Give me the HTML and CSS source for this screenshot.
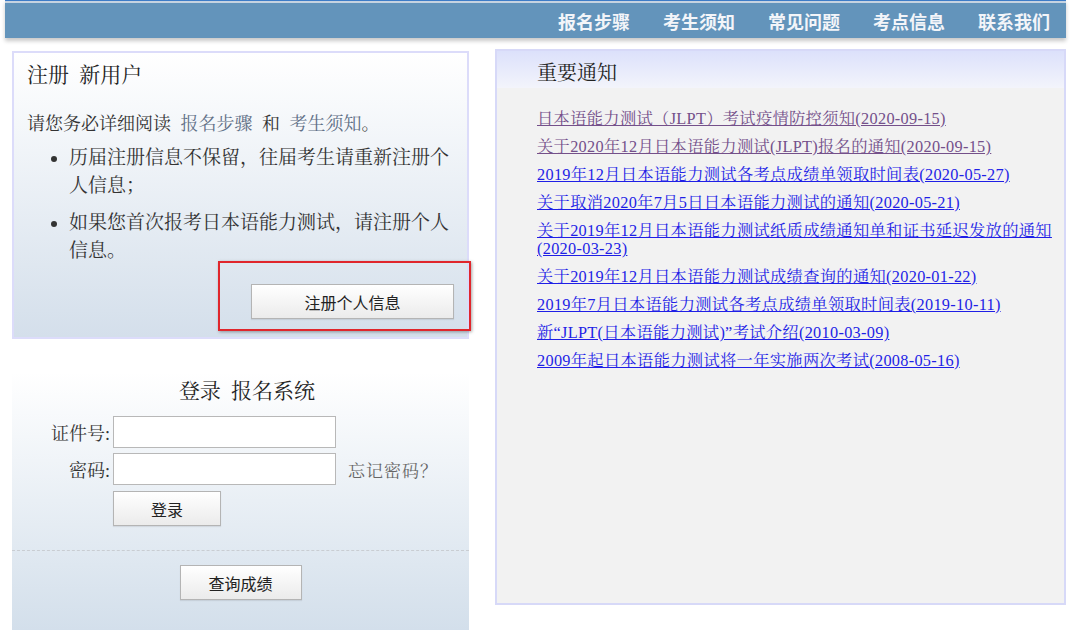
FILE: index.html
```html
<!DOCTYPE html>
<html lang="zh-CN">
<head>
    <meta charset="UTF-8">
    <meta name="viewport" content="width=device-width, initial-scale=1.0">
    <title>日本语能力测试 报名系统</title>
    <link rel="stylesheet" href="styles.css">
</head>
<body>
<div class="topbar">
    <ul class="nav">
        <li>报名步骤</li>
        <li>考生须知</li>
        <li>常见问题</li>
        <li>考点信息</li>
        <li>联系我们</li>
    </ul>
</div>

<div class="main">
    <div class="side">
        <div class="reg-box">
            <h2>注册 新用户</h2>
            <p class="intro">请您务必详细阅读 <a href="#">报名步骤</a> 和 <a href="#">考生须知</a>。</p>
            <ul class="tips">
                <li>历届注册信息不保留，往届考生请重新注册个人信息；</li>
                <li>如果您首次报考日本语能力测试，请注册个人信息。</li>
            </ul>
            <div class="reg-action">
                <button class="btn btn-reg">注册个人信息</button>
            </div>
            <div class="mark"></div>
        </div>

        <div class="login-box">
            <h2>登录 报名系统</h2>
            <div class="login-form">
                <label>证件号:</label>
                <input type="text">
                <label>密码:</label>
                <input type="password">
                <a class="forgot" href="#">忘记密码？</a>
                <button class="btn btn-login">登录</button>
            </div>
            <div class="divider"></div>
            <div class="query">
                <button class="btn btn-query">查询成绩</button>
            </div>
        </div>
    </div>

    <div class="notice-box">
        <h2>重要通知</h2>
        <ul class="notice-list">
            <li><a class="visited" href="#">日本语能力测试（JLPT）考试疫情防控须知(2020-09-15)</a></li>
            <li><a class="visited" href="#">关于2020年12月日本语能力测试(JLPT)报名的通知(2020-09-15)</a></li>
            <li><a href="#">2019年12月日本语能力测试各考点成绩单领取时间表(2020-05-27)</a></li>
            <li><a href="#">关于取消2020年7月5日日本语能力测试的通知(2020-05-21)</a></li>
            <li><a href="#">关于2019年12月日本语能力测试纸质成绩通知单和证书延迟发放的通知(2020-03-23)</a></li>
            <li><a href="#">关于2019年12月日本语能力测试成绩查询的通知(2020-01-22)</a></li>
            <li><a href="#">2019年7月日本语能力测试各考点成绩单领取时间表(2019-10-11)</a></li>
            <li><a href="#">新“JLPT(日本语能力测试)”考试介绍(2010-03-09)</a></li>
            <li><a href="#">2009年起日本语能力测试将一年实施两次考试(2008-05-16)</a></li>
        </ul>
    </div>
</div>
</body>
</html>
```

FILE: styles.css
```css
body {
    margin: 0;
    font-family: "Liberation Serif", "Noto Serif CJK SC", "Noto Sans CJK SC", serif;
    color: #333;
    background: #fff;
}

/* top navigation */
.topbar {
    margin-left: 5px;
    width: 1061px;
    height: 38px;
    background: linear-gradient(#3d7cc7 0, #3d7cc7 1px, #c6d3e1 1px, #c6d3e1 3px, #6394bb 3px);
    box-shadow: 0 3px 4px rgba(0,0,0,0.22);
}

.nav {
    list-style: none;
    margin: 0;
    padding: 3px 16px 0 0;
    height: 35px;
    display: flex;
    justify-content: flex-end;
    align-items: center;
    gap: 33px;
}

.nav li {
    font-family: "Noto Sans CJK SC", sans-serif;
    font-weight: bold;
    font-size: 18px;
    color: #f3f5f9;
}

.main {
    display: flex;
    align-items: flex-start;
    gap: 26px;
    padding: 11px 0 0 12px;
}

.side {
    width: 457px;
    margin-top: 2px;
}

h2 {
    margin: 0;
    font-weight: normal;
    line-height: 28px;
    word-spacing: 5px;
    color: #222;
}

/* register */
.reg-box {
    position: relative;
    height: 288px;
    box-sizing: border-box;
    border: 2px solid #dcdcfa;
    background: linear-gradient(#ffffff, #d4dfeb);
    padding: 8px 11px 0 13px;
}

.reg-box h2 {
    font-size: 21px;
}

.intro {
    margin: 21px 0 0;
    font-size: 18px;
    line-height: 28px;
    word-spacing: 5px;
}

.intro a {
    color: #5f6f86;
    text-decoration: none;
}

.tips {
    margin: 6px 0 0;
    padding-left: 42px;
    font-size: 19px;
    line-height: 28px;
}

.tips li + li {
    margin-top: 9px;
}

.reg-action {
    display: flex;
    justify-content: flex-end;
    margin-top: 19px;
}

.btn {
    font-family: "Noto Sans CJK SC", sans-serif;
    font-size: 16px;
    color: #222;
    border: 1px solid #b4b4b4;
    border-radius: 0;
    padding: 0;
    background: linear-gradient(#ffffff, #ebebeb);
    box-shadow: 0 1px 1px rgba(0,0,0,0.08);
    height: 35px;
}

.btn-reg {
    width: 203px;
    margin-right: 2px;
}

.mark {
    position: absolute;
    left: 204px;
    top: 208px;
    width: 253px;
    height: 70px;
    box-sizing: border-box;
    border: 2px solid #e0262c;
    box-shadow: 1px 1px 3px rgba(0,0,0,0.35);
}

/* login */
.login-box {
    margin-top: 33px;
    height: 258px;
    box-sizing: border-box;
    padding-top: 5px;
    background: linear-gradient(#ffffff, #d3dfeb);
}

.login-box h2 {
    font-size: 21px;
    text-align: center;
    padding-left: 13px;
}

.login-form {
    display: grid;
    grid-template-columns: 98px 223px auto;
    column-gap: 3px;
    row-gap: 5px;
    align-items: center;
    margin-top: 11px;
}

.login-form label {
    grid-column: 1;
    text-align: right;
    font-size: 18px;
}

.login-form input {
    width: 223px;
    height: 32px;
    box-sizing: border-box;
    margin: 0;
    border: 1px solid #b8b8b8;
    background: #fff;
}

.forgot {
    margin-left: 9px;
    font-size: 17px;
    letter-spacing: 1px;
    color: #666;
    text-decoration: none;
}

.btn-login {
    grid-column: 2;
    width: 108px;
    margin-top: 1px;
}

.divider {
    margin-top: 24px;
    border-top: 1px dashed #c9cdd2;
}

.query {
    display: flex;
    justify-content: center;
    margin-top: 14px;
}

.btn-query {
    width: 122px;
}

/* notices */
.notice-box {
    width: 571px;
    height: 556px;
    box-sizing: border-box;
    border: 2px solid #d7d9f8;
    background: linear-gradient(#dce1fb, #f3f4fb 37px, #f2f2f2 37px);
    padding: 8px 4px 0 40px;
}

.notice-box h2 {
    font-size: 20px;
}

.notice-list {
    list-style: none;
    margin: 23px 0 0;
    padding: 0;
    font-size: 16.3px;
    letter-spacing: 0.3px;
    line-height: 18px;
}

.notice-list li + li {
    margin-top: 10px;
}

.notice-list a {
    color: #1f1fe6;
}

.notice-list a.visited {
    color: #74508a;
}
```
